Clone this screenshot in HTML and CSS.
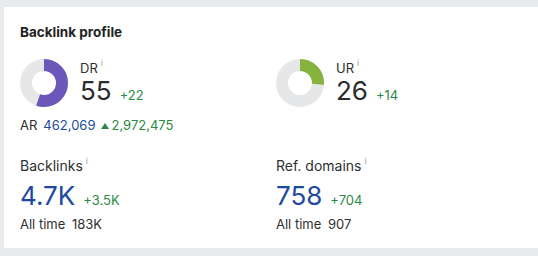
FILE: index.html
```html
<!DOCTYPE html>
<html lang="en">
<head>
  <meta charset="UTF-8">
  <meta name="viewport" content="width=device-width, initial-scale=1.0">
  <title>Backlink profile</title>
  <link rel="stylesheet" href="styles.css">
</head>
<body>
  <div class="card">
    <div class="content">
      <h2 class="title">Backlink profile</h2>

      <div class="row gauges">
        <div class="col">
          <div class="gauge">
            <svg class="donut" width="48" height="48" viewBox="0 0 48 48">
              <circle cx="24" cy="24" r="18" fill="none" stroke="#e6e7e9" stroke-width="12"/>
              <circle cx="24" cy="24" r="18" fill="none" stroke="#6b57b9" stroke-width="12"
                stroke-dasharray="62.2 113.1" transform="rotate(-90 24 24)"/>
            </svg>
            <div class="gauge-text">
              <div class="label">DR<sup class="info">i</sup></div>
              <div class="value-line">
                <span class="value">55</span>
                <span class="delta">+22</span>
              </div>
            </div>
          </div>
          <div class="ar">
            <span>AR</span>
            <span class="ar-rank">462,069</span>
            <span class="delta small"><span class="tri"></span>2,972,475</span>
          </div>
        </div>

        <div class="col">
          <div class="gauge">
            <svg class="donut" width="48" height="48" viewBox="0 0 48 48">
              <circle cx="24" cy="24" r="18" fill="none" stroke="#e6e7e9" stroke-width="12"/>
              <circle cx="24" cy="24" r="18" fill="none" stroke="#86b33b" stroke-width="12"
                stroke-dasharray="29.4 113.1" transform="rotate(-90 24 24)"/>
            </svg>
            <div class="gauge-text">
              <div class="label">UR<sup class="info">i</sup></div>
              <div class="value-line">
                <span class="value">26</span>
                <span class="delta">+14</span>
              </div>
            </div>
          </div>
        </div>
      </div>

      <div class="row counts">
        <div class="col">
          <div class="label big">Backlinks<sup class="info">i</sup></div>
          <div class="value-line">
            <span class="value blue">4.7K</span>
            <span class="delta">+3.5K</span>
          </div>
          <div class="all-time">All time <span class="num">183K</span></div>
        </div>
        <div class="col">
          <div class="label big">Ref. domains<sup class="info">i</sup></div>
          <div class="value-line">
            <span class="value blue">758</span>
            <span class="delta">+704</span>
          </div>
          <div class="all-time">All time <span class="num">907</span></div>
        </div>
      </div>
    </div>
    <div class="rail"></div>
  </div>
</body>
</html>
```

FILE: styles.css
```css
body {
  margin: 0;
  background-color: #e9eaec;
  font-family: Inter, "Noto Sans", sans-serif;
  color: #2f2f2f;
}
.card {
  display: flex;
  margin: 7px 0 0 4px;
  height: 241px;
  background: #fff;
}
.content {
  flex: 1;
  padding: 17px 0 0 16px;
}
.rail {
  width: 1px;
  margin: 10px 6px 16px 0;
  background: #e6e6e6;
}
.title {
  margin: 0;
  font-size: 13.5px;
  line-height: 16px;
  font-weight: 700;
  color: #222;
}
.row {
  display: flex;
}
.col {
  width: 256px;
}
.gauges {
  margin-top: 19px;
}
.gauge {
  display: flex;
  align-items: flex-start;
}
.donut {
  display: block;
  flex: none;
}
.gauge-text {
  margin-left: 12px;
  padding-top: 1px;
}
.label {
  font-size: 13px;
  line-height: 16px;
}
.label.big {
  font-size: 14px;
  line-height: 18px;
}
.info {
  font-size: 9px;
  color: #a5a5a5;
  margin-left: 3px;
  vertical-align: 7px;
  line-height: 0;
}
.value-line {
  display: flex;
  align-items: baseline;
  gap: 8px;
}
.value {
  font-size: 26px;
  line-height: 30px;
  font-weight: 400;
  color: #2b2b2b;
}
.value.blue {
  color: #1d4a9f;
}
.delta {
  font-size: 13px;
  color: #2a8a45;
}
.ar {
  margin-top: 10px;
  font-size: 13px;
  line-height: 16px;
  display: flex;
  gap: 6px;
  align-items: baseline;
}
.ar-rank {
  color: #1d4a9f;
}
.tri {
  display: inline-block;
  width: 0;
  height: 0;
  border-left: 4px solid transparent;
  border-right: 4px solid transparent;
  border-bottom: 6px solid #2a8a45;
  margin-right: 2px;
  vertical-align: 1px;
}
.counts {
  margin-top: 24px;
}
.counts .value-line {
  margin-top: 6px;
}
.all-time {
  margin-top: 5px;
  font-size: 13px;
  line-height: 16px;
}
.num {
  margin-left: 3px;
}
```
